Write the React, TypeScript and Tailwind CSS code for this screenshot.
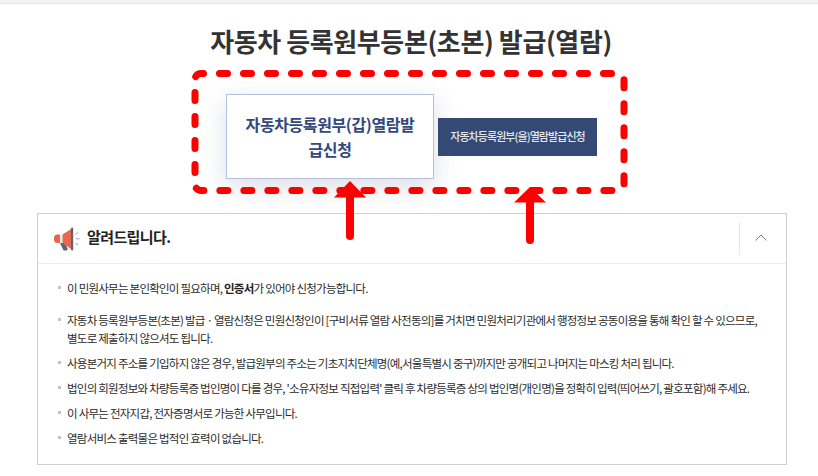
const notices = [
  { key: 'auth', className: 'mb-[14px]', body: <>이 민원사무는 본인확인이 필요하며, <b className="font-bold text-[#222]">인증서</b>가 있어야 신청가능합니다.</> },
  { key: 'consent', className: 'mb-[7px]', body: <>자동차 등록원부등본(초본) 발급 · 열람신청은 민원신청인이 [구비서류 열람 사전동의]를 거치면 민원처리기관에서 행정정보 공동이용을 통해 확인 할 수 있으므로, 별도로 제출하지 않으셔도 됩니다.</> },
  { key: 'address', className: 'mb-[7px]', body: <>사용본거지 주소를 기입하지 않은 경우, 발급원부의 주소는 기초지치단체명(예,서울특별시 중구)까지만 공개되고 나머지는 마스킹 처리 됩니다.</> },
  { key: 'corp', className: 'mb-[7px]', body: <>법인의 회원정보와 차량등록증 법인명이 다를 경우, '소유자정보 직접입력' 클릭 후 차량등록증 상의 법인명(개인명)을 정확히 입력(띄어쓰기, 괄호포함)해 주세요.</> },
  { key: 'wallet', className: 'mb-[7px]', body: <>이 사무는 전자지갑, 전자증명서로 가능한 사무입니다.</> },
  { key: 'print', className: '', body: <>열람서비스 출력물은 법적인 효력이 없습니다.</> },
];

function Megaphone() {
  return (
    <svg width="26" height="24" viewBox="0 0 26 24" className="shrink-0">
      <path d="M6 16h5l2.5 5.5a1.5 1.5 0 0 1-1.4 2h-1.6a1.6 1.6 0 0 1-1.5-1.1z" fill="#5d6478" />
      <path d="M3.5 7.5H6v8.5H3.5A3.5 3.5 0 0 1 0 12.5v-1.500A3.500 3.500 0 0 1 3.500 7.500z" fill="#e8674a" />
      <rect x="6" y="7.500" width="2.500" height="8.500" fill="#f3ede8" />
      <path d="M8.500 7.500L17 2v20l-8.500-6z" fill="#e8674a" />
      <rect x="17" y="0.500" width="2.200" height="23" rx="1.100" fill="#5d6478" />
      <path d="M21.500 7.500l2.500-2M22 11.800h3.500M21.500 16l2.500 2" stroke="#9aa0ae" strokeWidth="1" fill="none" />
    </svg>
  );
}

export default function App() {
  return (
    <div className="relative h-[476px] w-[818px] overflow-hidden bg-white font-['Noto_Sans_CJK_KR','Noto_Sans',sans-serif]">
      <div className="h-[4px] bg-[#f3f3f7] border-b border-[#e6e6ea]" />

      <h1 className="mt-[18px] pl-1 text-center text-[26px] font-bold leading-[38px] tracking-[-0.015em] text-[#333]">
        자동차 등록원부등본(초본) 발급(열람)
      </h1>

      <div className="ml-[226px] mt-[34px] flex items-center gap-1">
        <button className="h-[85px] w-[208px] border border-[#b3bfdc] bg-white px-4 text-[16px] font-bold leading-[25px] tracking-[-0.025em] text-[#34497a] shadow-[0_8px_24px_rgba(60,70,110,0.18)]">
          자동차등록원부(갑)열람발급신청
        </button>
        <button className="h-[38px] w-[159px] bg-[#344a75] text-[11px] font-medium tracking-[-0.085em] text-[#e4e7ee]">
          자동차등록원부(을)열람발급신청
        </button>
      </div>

      <section className="ml-[37px] mt-[34px] h-[252px] w-[750px] border border-[#d2d2d2] bg-white">
        <div className="flex h-[50px] items-center border-b border-[#ececec] pl-4">
          <Megaphone />
          <h2 className="ml-[7px] -translate-y-px text-[15px] font-bold tracking-[-0.04em] text-[#222]">알려드립니다.</h2>
          <div className="ml-auto flex h-[33px] w-[47px] items-center justify-center border-l border-[#e8e8e8] pb-0.5 pr-1">
            <svg width="12" height="7" viewBox="0 0 12 7" fill="none" stroke="#7d8290" strokeWidth="1">
              <path d="M0.5 6.5L6 1l5.5 5.5" />
            </svg>
          </div>
        </div>
        <ul className="px-[20px] pt-[15px]">
          {notices.map((n) => (
            <li key={n.key} className={`relative pl-[9px] text-[11.5px] leading-[18px] tracking-[-0.066em] text-[#2b2b2b] ${n.className}`}>
              <span className="absolute left-0 top-[7px] h-[3px] w-[3px] bg-[#c4c4c4]" />
              {n.body}
            </li>
          ))}
        </ul>
      </section>

      {/* hand drawn red markup on top of the capture */}
      <svg className="pointer-events-none absolute left-0 top-0" width="818" height="476" viewBox="0 0 818 476" fill="none">
        <rect x="195" y="73.5" width="429" height="117" rx="6" stroke="#ff0000" strokeWidth="7" strokeLinecap="round" strokeDasharray="8 16" strokeDashoffset="5.5" />
        <path d="M350 196v40" stroke="#ff0000" strokeWidth="8" strokeLinecap="round" />
        <path d="M350 181l16 16.5h-32z" fill="#ff0000" />
        <path d="M530 200v40" stroke="#ff0000" strokeWidth="8" strokeLinecap="round" />
        <path d="M530 187l16 15.500h-32z" fill="#ff0000" />
      </svg>
    </div>
  );
}
